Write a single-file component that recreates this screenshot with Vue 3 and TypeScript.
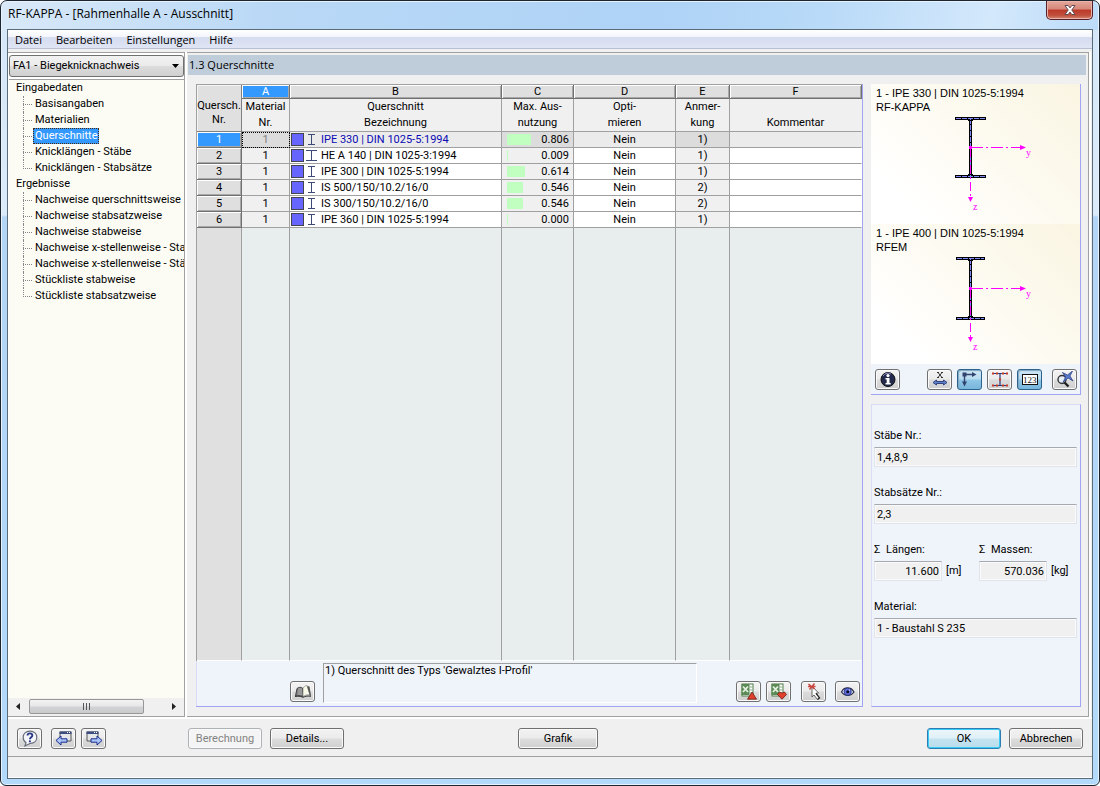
<script setup lang="ts">
import { ref } from 'vue'

interface SectionRow {
  nr: number
  material: number
  name: string
  wide: boolean
  ratio: number
  optimise: string
  note: string
}

interface Preview {
  title: string
  program: string
  half: number
  bottom: number
}

const menu = ['Datei', 'Bearbeiten', 'Einstellungen', 'Hilfe']

const tree = [
  {
    label: 'Eingabedaten',
    items: ['Basisangaben', 'Materialien', 'Querschnitte', 'Knicklängen - Stäbe', 'Knicklängen - Stabsätze'],
  },
  {
    label: 'Ergebnisse',
    items: [
      'Nachweise querschnittsweise',
      'Nachweise stabsatzweise',
      'Nachweise stabweise',
      'Nachweise x-stellenweise - Stab',
      'Nachweise x-stellenweise - Stäb',
      'Stückliste stabweise',
      'Stückliste stabsatzweise',
    ],
  },
]

const activeItem = ref('Querschnitte')
const activeRow = ref(1)

const letters = ['A', 'B', 'C', 'D', 'E', 'F']
const heads = [
  ['Material', 'Nr.'],
  ['Querschnitt', 'Bezeichnung'],
  ['Max. Aus-', 'nutzung'],
  ['Opti-', 'mieren'],
  ['Anmer-', 'kung'],
  ['\u00a0', 'Kommentar'],
]

const rows: SectionRow[] = [
  { nr: 1, material: 1, name: 'IPE 330 | DIN 1025-5:1994', wide: false, ratio: 0.806, optimise: 'Nein', note: '1)' },
  { nr: 2, material: 1, name: 'HE A 140 | DIN 1025-3:1994', wide: true, ratio: 0.009, optimise: 'Nein', note: '1)' },
  { nr: 3, material: 1, name: 'IPE 300 | DIN 1025-5:1994', wide: false, ratio: 0.614, optimise: 'Nein', note: '1)' },
  { nr: 4, material: 1, name: 'IS 500/150/10.2/16/0', wide: false, ratio: 0.546, optimise: 'Nein', note: '2)' },
  { nr: 5, material: 1, name: 'IS 300/150/10.2/16/0', wide: false, ratio: 0.546, optimise: 'Nein', note: '2)' },
  { nr: 6, material: 1, name: 'IPE 360 | DIN 1025-5:1994', wide: false, ratio: 0, optimise: 'Nein', note: '1)' },
]

const previews: Preview[] = [
  { title: '1 - IPE 330 | DIN 1025-5:1994', program: 'RF-KAPPA', half: 15, bottom: 61 },
  { title: '1 - IPE 400 | DIN 1025-5:1994', program: 'RFEM', half: 14, bottom: 63 },
]

const barWidth = (ratio: number): string => `${Math.max(1, Math.round(ratio * 30))}px`
</script>

<template>
  <div class="window">
    <header class="titlebar">
      <h1>RF-KAPPA - [Rahmenhalle A - Ausschnitt]</h1>
      <button class="close" type="button" aria-label="Schließen">
        <svg width="12" height="10" viewBox="0 0 12 10">
          <path d="M1 .5h3.2L6 2.900 7.800.5H11L7.800 5 11 9.500H7.800L6 7.100 4.200 9.500H1L4.200 5z" fill="#fff" stroke="#5d4a52" stroke-width="1" />
        </svg>
      </button>
    </header>

    <div class="client">
      <nav class="menubar">
        <button v-for="m in menu" :key="m" type="button">{{ m }}</button>
      </nav>

      <main class="main">
        <aside class="sidebar">
          <div class="combo">
            <select aria-label="Bemessungsfall">
              <option>FA1 - Biegeknicknachweis</option>
            </select>
            <svg class="combo-arrow" width="7" height="4" viewBox="0 0 7 4"><path d="M0 0h7L3.500 4z" fill="#000" /></svg>
          </div>
          <div class="tree">
            <div v-for="g in tree" :key="g.label" class="group">
              <div class="group-label">{{ g.label }}</div>
              <ul>
                <li v-for="i in g.items" :key="i">
                  <button type="button" :class="{ active: i === activeItem }" @click="activeItem = i">{{ i }}</button>
                </li>
              </ul>
            </div>
          </div>
          <div class="scrollbar">
            <svg width="4" height="7" viewBox="0 0 4 7"><path d="M4 0v7L0 3.500z" fill="#222" /></svg>
            <div class="track"><div class="thumb"><i></i><i></i><i></i></div></div>
            <svg width="4" height="7" viewBox="0 0 4 7"><path d="M0 0v7L4 3.500z" fill="#222" /></svg>
          </div>
        </aside>

        <section class="page">
          <h2>1.3 Querschnitte</h2>
          <div class="columns">
            <div class="sheet">
              <div class="table-wrap">
                <table>
                  <colgroup>
                    <col class="c-nr" /><col class="c-a" /><col class="c-b" /><col class="c-c" /><col class="c-d" /><col class="c-e" /><col />
                  </colgroup>
                  <thead>
                    <tr class="letters">
                      <th rowspan="2" class="corner">Quersch.<br />Nr.</th>
                      <th v-for="l in letters" :key="l" class="raised" :class="{ on: l === 'A' }">{{ l }}</th>
                    </tr>
                    <tr class="heads">
                      <th v-for="h in heads" :key="h[1]">{{ h[0] }}<br />{{ h[1] }}</th>
                    </tr>
                  </thead>
                  <tbody>
                    <tr v-for="r in rows" :key="r.nr" :class="{ current: r.nr === activeRow }" @click="activeRow = r.nr">
                      <th scope="row" class="raised" :class="{ on: r.nr === activeRow }">{{ r.nr }}</th>
                      <td class="ro mat">{{ r.material }}</td>
                      <td>
                        <div class="name">
                          <span class="swatch"></span>
                          <svg width="12" height="11" viewBox="0 0 12 11" fill="#3d4a78" shape-rendering="crispEdges">
                            <path v-if="r.wide" d="M1 0h11v1H1zM1 10h11v1H1zM6 1h1v9H6z" />
                            <path v-else d="M3 0h7v1H3zM3 10h7v1H3zM6 1h1v9H6z" />
                          </svg>
                          <span class="label">{{ r.name }}</span>
                        </div>
                      </td>
                      <td class="ro">
                        <div class="ratio"><span class="bar" :style="{ width: barWidth(r.ratio) }"></span>{{ r.ratio.toFixed(3) }}</div>
                      </td>
                      <td>{{ r.optimise }}</td>
                      <td class="ro">{{ r.note }}</td>
                      <td></td>
                    </tr>
                    <tr class="filler">
                      <td class="side"></td><td v-for="l in letters" :key="l"></td>
                    </tr>
                  </tbody>
                </table>
              </div>
              <div class="sheet-foot">
                <button class="tool" type="button" aria-label="Bibliothek">
                  <svg width="18" height="16" viewBox="0 0 18 16">
                    <path d="M1.500 12L3 4.500c2-1.500 4-1.500 5.500-.5l.5 8.500c-2-1-5-1-7.500-.5z" fill="#777" stroke="#444" />
                    <path d="M4 4.500c1.500-1 3-1 4 0l.5 7c-1.500-.6-3-.7-5-.4z" fill="#999" />
                    <path d="M9 4c2-2 3-2.500 4-2.500l3 9.500c-2.500-.5-5 0-7 1.500z" fill="#fafae8" stroke="#777" stroke-width=".6" />
                    <path d="M13 2l2.500.5 1.500 9-1 .5z" fill="#555" /><path d="M1 12.500c3-.6 5-.4 8 .8 2-1 5-1.600 8-1" fill="none" stroke="#333" />
                  </svg>
                </button>
                <div class="note">1) Querschnitt des Typs 'Gewalztes I-Profil'</div>
                <div class="sheet-tools">
                  <button v-for="dir in ['up', 'down']" :key="dir" class="tool" type="button" :aria-label="dir === 'up' ? 'Excel-Export' : 'Excel-Import'">
                    <svg width="18" height="17" viewBox="0 0 18 17">
                      <rect x="2" y="1" width="11" height="12" fill="#fff" stroke="#4f7d4b" />
                      <path d="M9.500 4h3M9.500 7h3M9.500 10h3" stroke="#8bb086" />
                      <path d="M1.500 1h8v11h-8z" fill="#5b8a57" />
                      <path d="M3 3.500l5 5.500m0-5.500L3 9" stroke="#e4f2e0" stroke-width="1.800" />
                      <path v-if="dir === 'up'" d="M12 9l4.500 7.200h-9z" fill="#e0402c" stroke="#701a12" stroke-width=".8" />
                      <path v-else d="M12 16.200L7.500 11.500l2-2.500 2.500 1 2.500-1 2 2.500z" fill="#e0402c" stroke="#701a12" stroke-width=".8" />
                    </svg>
                  </button>
                  <button class="tool pick" type="button" aria-label="Auswählen">
                    <svg width="18" height="17" viewBox="0 0 18 17">
                      <path d="M7 3l6.500 7-2.500.3 3.500 4.700-2 1.500-3.500-4.500-2 2z" fill="#fff" stroke="#555" stroke-width=".9" />
                      <path d="M11 10.300l3.500 4.700-2 1.500" fill="none" stroke="#222" stroke-width="1.200" />
                      <path d="M3.500 1l6 5M9.500 .5L4.500 6.500M3 3.500h7.500" stroke="#c8473f" stroke-width="1.500" />
                    </svg>
                  </button>
                  <button class="tool view" type="button" aria-label="Ansicht">
                    <svg width="18" height="16" viewBox="0 0 18 16">
                      <path d="M2.500 8C5 2.500 12 2.500 15 8c-3 4.500-9.500 4.500-12.500 0z" fill="#d9dff5" stroke="#2a2c45" stroke-width="1.200" />
                      <circle cx="8.700" cy="7.700" r="3.600" fill="#5f70e0" stroke="#28317f" stroke-width=".8" />
                      <circle cx="8.700" cy="7.700" r="1.500" fill="#0a0a20" /><path d="M10 6h1" stroke="#fff" />
                    </svg>
                  </button>
                </div>
              </div>
            </div>

            <div class="right">
              <div class="previews">
                <figure v-for="p in previews" :key="p.program">
                  <figcaption>{{ p.title }}<br />{{ p.program }}</figcaption>
                  <svg width="208" height="108" viewBox="0 0 208 108">
                    <g shape-rendering="crispEdges">
                      <rect :x="99 - p.half" y="3" :width="p.half * 2 + 1" height="3" fill="#000" />
                      <rect :x="99 - p.half" :y="p.bottom" :width="p.half * 2 + 1" height="3" fill="#000" />
                      <rect x="98" y="5" width="3" :height="p.bottom - 4" fill="#000" />
                      <path :d="`M${100 - p.half} 4.500H${99 + p.half}M${100 - p.half} ${p.bottom + 1.5}H${99 + p.half}M99.500 5V${p.bottom + 1}`" stroke="#7f88f8" stroke-dasharray="5 1" />
                      <path :d="`M97 6.500h5M97 ${p.bottom - 1}h5`" stroke="#000" />
                      <path :d="`M99.500 ${p.bottom / 2 + 3}V86`" stroke="#f0f" stroke-dasharray="9 3 2 3" />
                      <path :d="`M100 ${Math.round(p.bottom / 2) + 2.5}H150`" stroke="#f0f" stroke-dasharray="12 3 2 3" />
                    </g>
                    <rect x="98" :y="Math.round(p.bottom / 2) + 1" width="3" height="3" fill="#f0f" />
                    <path :d="`M149 ${Math.round(p.bottom / 2)}v5l6-2.500z`" fill="#f0f" />
                    <path d="M97 83h5l-2.500 5z" fill="#f0f" />
                    <text x="155" :y="Math.round(p.bottom / 2) + 11">y</text>
                    <text x="102" y="96">z</text>
                  </svg>
                </figure>
                <div class="preview-tools">
                  <button class="tool" type="button" aria-label="Info">
                    <svg width="18" height="17" viewBox="0 0 18 17">
                      <circle cx="9" cy="8.500" r="7" fill="#232a4c" stroke="#111" />
                      <path d="M4 5c2-3 6-3.500 8-2" stroke="#8a94c4" fill="none" />
                      <circle cx="9" cy="4.600" r="1.600" fill="#fff" /><path d="M6.500 7h4v5h1.200v1.500H6.500V12h1.200V8.500H6.500z" fill="#fff" />
                    </svg>
                  </button>
                  <button class="tool gap-a" type="button" aria-label="Maße">
                    <svg width="18" height="17" viewBox="0 0 18 17">
                      <path d="M7 1.500l4 5M11 1.500l-4 5M6 1.500h2M10 1.500h2M6 6.500h2M10 6.500h2" stroke="#222" stroke-width=".9" />
                      <path d="M2 11.500L5.500 9v1.500h7V9l3.500 2.500-3.500 2.500v-1.500h-7V14z" fill="#5f7fd0" stroke="#33457f" />
                    </svg>
                  </button>
                  <button class="tool pressed" type="button" aria-label="Achsen">
                    <svg width="18" height="17" viewBox="0 0 18 17">
                      <path d="M3.500 3.500h9M3.500 3.500v9" stroke="#31456f" stroke-width="1.400" />
                      <path d="M11 1l4.500 2.500L11 6zM1 10.500h5l-2.500 5z" fill="#31456f" /><rect x="1.500" y="1.500" width="4" height="4" fill="#31456f" />
                    </svg>
                  </button>
                  <button class="tool" type="button" aria-label="Spannungspunkte">
                    <svg width="18" height="17" viewBox="0 0 18 17">
                      <path d="M2 2.500h14M2 14.500h14M9 2.500v12" stroke="#2c3876" stroke-width="1.200" />
                      <path d="M1 1.500h2v2H1zM5 1.500h2v2H5zM11 1.500h2v2h-2zM15 1.500h2v2h-2zM8 7.500h2v2H8zM1 13.500h2v2H1zM5 13.500h2v2H5zM11 13.500h2v2h-2zM15 13.500h2v2h-2z" fill="#c83a24" />
                    </svg>
                  </button>
                  <button class="tool pressed" type="button" aria-label="Nummerierung">
                    <svg width="18" height="17" viewBox="0 0 18 17">
                      <rect x="1.500" y="3.500" width="15" height="10" fill="#fff" stroke="#111" />
                      <text class="digits" x="2" y="12">123</text>
                    </svg>
                  </button>
                  <button class="tool gap-b" type="button" aria-label="Ganzer Querschnitt">
                    <svg width="18" height="17" viewBox="0 0 18 17">
                      <circle cx="6" cy="8.500" r="4" fill="#e6eefa" stroke="#333" stroke-width="1.400" />
                      <path d="M8.500 11.500l4 4" stroke="#222" stroke-width="2.400" />
                      <path d="M6.500 1.500l5 2.500L16.500 0 14 5l3 5-5-3-5 4.500L9.500 6z" fill="#5878cc" stroke="#22397c" stroke-width=".7" />
                    </svg>
                  </button>
                </div>
              </div>

              <div class="details">
                <div class="field">
                  <label for="staebe">Stäbe Nr.:</label>
                  <input id="staebe" type="text" readonly value="1,4,8,9" />
                </div>
                <div class="field">
                  <label for="saetze">Stabsätze Nr.:</label>
                  <input id="saetze" type="text" readonly value="2,3" />
                </div>
                <div class="pair">
                  <div class="field sum">
                    <label for="laengen"><span class="sigma">Σ</span>Längen:</label>
                    <div class="with-unit"><input id="laengen" type="text" readonly value="11.600" />[m]</div>
                  </div>
                  <div class="field sum">
                    <label for="massen"><span class="sigma">Σ</span>Massen:</label>
                    <div class="with-unit"><input id="massen" type="text" readonly value="570.036" />[kg]</div>
                  </div>
                </div>
                <div class="field">
                  <label for="material">Material:</label>
                  <input id="material" type="text" readonly value="1 - Baustahl S 235" />
                </div>
              </div>
            </div>
          </div>
        </section>
      </main>

      <footer class="actions">
        <div class="left-tools">
          <button class="tool" type="button" aria-label="Hilfe">
            <svg width="18" height="17" viewBox="0 0 18 17">
              <path d="M9 1.200c4.200 0 6.800 2.600 6.800 6s-2.600 6-6.300 6.100L4 15.800l1-3.300C3 11.500 2.200 9.500 2.200 7.200c0-3.400 2.600-6 6.800-6z" fill="#f4f6fa" stroke="#6a6f7c" stroke-width="1.200" />
              <path d="M6.500 5.500c.2-3 5.200-2.700 4.800.2-.2 1.600-2.300 1.700-2.400 3.500" fill="none" stroke="#2b3a86" stroke-width="1.900" /><circle cx="8.900" cy="11.300" r="1.100" fill="#2b3a86" />
            </svg>
          </button>
          <button class="tool prev" type="button" aria-label="Zurück">
            <svg width="18" height="17" viewBox="0 0 18 17">
              <path d="M5 2h11v9H5z" fill="#e4e6ea" stroke="#555" /><path d="M4.500 1.500h12v2.500h-12z" fill="#3c4c80" /><path d="M12 2.500h1M14 2.500h1" stroke="#fff" />
              <path d="M1 10.500L6 6v2.800h6v3.400H6V15z" fill="#a9c2f8" stroke="#1b2c8c" />
            </svg>
          </button>
          <button class="tool" type="button" aria-label="Weiter">
            <svg width="18" height="17" viewBox="0 0 18 17">
              <path d="M2 2h11v9H2z" fill="#e4e6ea" stroke="#555" /><path d="M1.500 1.500h12v2.500h-12z" fill="#3c4c80" /><path d="M9 2.500h1M11 2.500h1" stroke="#fff" />
              <path d="M17 10.500L12 6v2.800H6v3.400h6V15z" fill="#a9c2f8" stroke="#1b2c8c" />
            </svg>
          </button>
        </div>
        <button class="btn" type="button" disabled>Berechnung</button>
        <button class="btn details-btn" type="button">Details...</button>
        <button class="btn grafik" type="button">Grafik</button>
        <button class="btn ok" type="button">OK</button>
        <button class="btn" type="button">Abbrechen</button>
      </footer>
      <div class="status"></div>
    </div>
  </div>
</template>

<style>
body {
  background: #fff;
}
</style>

<style scoped>
* {
  box-sizing: border-box;
}
button,
input,
select {
  font: inherit;
  color: inherit;
  margin: 0;
  padding: 0;
}
.window {
  min-height: 100vh;
  display: flex;
  flex-direction: column;
  padding: 0 6px 6px;
  border: 1px solid #1d2630;
  border-radius: 7px 7px 6px 6px;
  background:
    linear-gradient(100deg, #d9e9f8 0, #b9d8f6 25%, #aed3f6 60%, #b9daf8 75%, #d3e8fb 90%, #bcdcf8 100%) 0 0 / 100% 29px no-repeat,
    linear-gradient(#d3e6f8 0, #dcebfa 214px, #b3d5f6 216px, #b3d9fb 100%);
  box-shadow: inset 0 0 0 1px #e6f3fd;
  font: 11px/14px Roboto, 'Liberation Sans', Arial, sans-serif;
  color: #000;
}
.titlebar {
  display: flex;
  justify-content: space-between;
  align-items: flex-start;
  height: 28px;
}
h1 {
  margin: 0;
  padding: 4px 0 0 1px;
  font: 12px/18px 'Open Sans', 'Noto Sans', sans-serif;
}
.close {
  display: flex;
  align-items: center;
  justify-content: center;
  width: 47px;
  height: 19px;
  border: 1px solid #55202a;
  border-top: 0;
  border-radius: 0 0 5px 5px;
  background: linear-gradient(#e5a79c 0, #d5877a 45%, #bd3827 50%, #c0503e 80%, #d88a78 100%);
  box-shadow: inset 0 0 0 1px #e9b5ab;
}
.client {
  flex: 1;
  display: flex;
  flex-direction: column;
  border: 1px solid #5a6b7a;
  background: #f0f0f0;
}
.menubar {
  display: flex;
  height: 19px;
  background: linear-gradient(#fff 0, #f3f5fb 38%, #d5dcef 42%, #dfe5f4 100%);
  border-bottom: 1px solid #b9c0d4;
}
.menubar button {
  border: 0;
  background: none;
  padding: 1px 7px 0 7px;
  font: 11px/18px 'Open Sans', 'Noto Sans', sans-serif;
}
.main {
  flex: 1;
  display: grid;
  grid-template-columns: 177px minmax(0, 1fr);
  gap: 2px;
  padding: 3px 3px 0 0;
  box-shadow: 0 2px #fff;
}
.sidebar {
  display: flex;
  flex-direction: column;
  min-width: 0;
  border: 1px solid #a0a0a0;
  border-left: 0;
  background: #fff;
  box-shadow: 2px 0 #fff;
}
.combo {
  position: relative;
  height: 22px;
  margin: 2px 0 2px 1px;
}
.combo select {
  width: 100%;
  height: 100%;
  padding: 0 20px 0 3px;
  appearance: none;
  border: 1px solid #707070;
  border-radius: 3px;
  background: linear-gradient(#f2f2f2 0, #ebebeb 48%, #dddddd 52%, #cfcfcf 100%);
}
.combo-arrow {
  position: absolute;
  right: 5px;
  top: 9px;
  pointer-events: none;
}
.tree {
  flex: 1;
  margin-left: 1px;
  padding-left: 1px;
  overflow: hidden;
  border-top: 1px solid #a0a0a0;
  background: #fcfcf4;
  white-space: nowrap;
}
.group-label {
  padding-left: 6px;
  line-height: 16px;
}
.tree ul {
  margin: 0;
  padding: 0;
  list-style: none;
}
.tree li {
  position: relative;
  height: 16px;
  padding-left: 23px;
}
.tree li::before,
.tree li::after {
  content: '';
  position: absolute;
  left: 13px;
  top: 0;
  height: 100%;
  border-left: 1px dotted #888;
}
.tree li:last-child::before {
  height: 9px;
}
.tree li::after {
  top: 8px;
  width: 9px;
  height: 1px;
  border-left: 0;
  border-top: 1px dotted #888;
}
.tree button {
  display: block;
  height: 16px;
  padding: 0 1px;
  border: 1px solid transparent;
  background: none;
  line-height: 14px;
}
.tree button.active {
  background: #3399ff;
  border: 1px dotted #4a2a10;
  color: #fff;
}
.scrollbar {
  display: flex;
  align-items: center;
  height: 18px;
  padding: 0 8px 2px 8px;
  background: #f0f0f0;
}
.track {
  flex: 1;
  padding: 0 28px 0 9px;
}
.thumb {
  display: flex;
  align-items: center;
  justify-content: center;
  gap: 2px;
  height: 15px;
  border: 1px solid #979797;
  border-radius: 2px;
  background: linear-gradient(#f3f3f3 0, #e6e6e8 48%, #d2d3d6 52%, #cacbcd 100%);
}
.thumb i {
  width: 1px;
  height: 7px;
  background: #555;
}
.page {
  display: flex;
  flex-direction: column;
  min-width: 0;
  padding-left: 1px;
  border: 1px solid #a0a0a0;
  border-left: 0;
  box-shadow: 2px 0 #fff;
}
h2 {
  margin: 2px 2px 9px 0;
  padding-left: 1px;
  font: 11px/20px 'Open Sans', 'Noto Sans', sans-serif;
  background: #bfccd9;
}
.columns {
  flex: 1;
  display: grid;
  grid-template-columns: minmax(0, 1fr) 210px;
  gap: 8px;
  padding: 0 7px 9px 8px;
}
.sheet {
  display: flex;
  flex-direction: column;
  border-right: 1px solid #a3a3f3;
  border-bottom: 1px solid #a3a3f3;
  background: #eff3fa;
}
.table-wrap {
  flex: 1;
  display: grid;
  border-left: 1px solid #a0a0a0;
  border-top: 1px solid #a0a0a0;
}
table {
  width: 100%;
  height: 100%;
  table-layout: fixed;
  border-collapse: separate;
  border-spacing: 0;
}
.c-nr { width: 45px; }
.c-a { width: 48px; }
.c-b { width: 212px; }
.c-c { width: 72px; }
.c-d { width: 102px; }
.c-e { width: 54px; }
th,
td {
  padding: 0;
  border-right: 1px solid #a0a0a0;
  border-bottom: 1px solid #a0a0a0;
  font-weight: normal;
  text-align: center;
  white-space: nowrap;
  line-height: 15px;
}
th:last-child,
td:last-child {
  border-right-color: transparent;
}
td {
  background: #fff;
}
.letters th {
  height: 14px;
  line-height: 13px;
}
.letters th.corner {
  background: #e0e0e0;
  line-height: 14px;
  border-right-color: #808080;
  border-bottom-color: #808080;
  box-shadow: inset 1px 1px #f4f4f4;
  padding-top: 14px;
  vertical-align: top;
}
th.raised {
  background: #dfdfdf;
  border-right: 1px solid #707070;
  border-bottom: 1px solid #707070;
  box-shadow: inset 1px 1px #fff, inset -1px -1px #a8a8a8;
}
th.raised.on {
  background: #3399ff;
  color: #fff;
}
.heads th {
  height: 33px;
  line-height: 16px;
  vertical-align: top;
  background: #f0f0f0;
}
tbody tr {
  height: 16px;
}
td.ro {
  background: #f0f0f0;
}
.current td {
  background: #ebebeb;
}
.current td.ro {
  background: #dcdcdc;
}
.current td.mat {
  color: #808080;
  outline: 1px dotted #000;
  outline-offset: -1px;
}
.name {
  display: flex;
  align-items: center;
  height: 15px;
  padding-left: 1px;
}
.swatch {
  width: 13px;
  height: 13px;
  margin-right: 1px;
  border: 1px solid #44444c;
  background: #6666ff;
}
.name .label {
  margin-left: 4px;
}
.current .label {
  color: #0a0ab4;
}
.ratio {
  display: flex;
  align-items: center;
  justify-content: space-between;
  height: 15px;
  padding: 0 4px 0 5px;
}
.bar {
  height: 11px;
  background: #c0ffc0;
}
tbody tr.filler {
  height: auto;
}
.filler td {
  background: #e8eeee;
  border-bottom-color: #fff;
}
.filler td.side {
  background: #e0e0e0;
}
.sheet-foot {
  display: flex;
  height: 45px;
  padding: 2px 2px 3px 93px;
  border-left: 1px solid #d8dcf6;
}
.note {
  flex: 1;
  max-width: 374px;
  margin-left: 8px;
  padding: 0 1px;
  border: 1px solid #fff;
  border-top-color: #a0a0a0;
  border-left-color: #a0a0a0;
}
.sheet-tools {
  display: flex;
  gap: 5px;
  margin-left: auto;
}
.sheet-foot .tool {
  align-self: flex-end;
}
.sheet-foot > .tool,
.sheet-tools .tool {
  margin-bottom: 1px;
}
.tool {
  display: flex;
  align-items: center;
  justify-content: center;
  flex: none;
  width: 25px;
  height: 21px;
  border: 1px solid #707070;
  border-radius: 3px;
  background: linear-gradient(#f3f3f3 0, #ebebeb 48%, #dcdcdc 52%, #cfcfcf 100%);
  box-shadow: inset 0 0 0 1px #fafafa;
}
.pick {
  margin-left: 5px;
}
.view {
  margin-left: 4px;
}
.tool.pressed {
  border-color: #2c628b;
  background: linear-gradient(#cfe6f5 0, #b9dcf0 48%, #8fc6e6 52%, #78b6dc 100%);
  box-shadow: inset 1px 1px 1px #7fa6bf;
}
.right {
  display: flex;
  flex-direction: column;
  gap: 9px;
}
.previews {
  border-right: 1px solid #a3a3f3;
  border-bottom: 1px solid #a3a3f3;
  background: #eff3fa;
}
figure {
  height: 140px;
  margin: 0;
  padding-top: 2px;
  background: linear-gradient(225deg, #faf5e2 0, #fdfbf2 50%, #ffffff 85%);
}
figure svg {
  display: block;
}
figure text {
  font: 10px 'Liberation Serif', serif;
  fill: #f0f;
}
figcaption {
  padding-left: 5px;
  font-family: 'Liberation Sans', Arial, sans-serif;
}
.preview-tools {
  display: flex;
  gap: 5px;
  padding: 5px 3px 4px 4px;
}
.gap-a {
  margin-left: auto;
}
.gap-b {
  margin-left: 5px;
}
.digits {
  font: 9px 'Liberation Serif', serif;
  fill: #111;
}
.details {
  flex: 1;
  display: flex;
  flex-direction: column;
  gap: 19px;
  padding: 24px 3px 0 2px;
  border: 1px solid #d8dcf4;
  border-right-color: #a3a3f3;
  border-bottom-color: #a3a3f3;
  background: #eff3fa;
}
.field label {
  display: block;
  margin-bottom: 4px;
}
.field input {
  display: block;
  width: 100%;
  height: 20px;
  padding: 0 2px;
  border: 1px solid #e2e4ec;
  border-top-color: #a7a9b0;
  border-radius: 0;
  background: #f0f0f0;
  box-shadow: inset 0 0 0 1px #fafafa;
}
.pair {
  display: flex;
  gap: 18px;
}
.sum {
  width: 87px;
}
.sigma {
  display: inline-block;
  width: 12px;
}
.with-unit {
  display: flex;
  align-items: center;
  gap: 4px;
}
.field.sum input {
  width: 68px;
  flex: none;
  text-align: right;
}
.actions {
  display: flex;
  align-items: center;
  height: 39px;
  padding: 4px 9px 0 9px;
}
.left-tools {
  display: flex;
  gap: 5px;
  width: 171px;
}
.prev {
  margin-left: 4px;
}
.btn {
  width: 74px;
  height: 21px;
  border: 1px solid #707070;
  border-radius: 3px;
  background: linear-gradient(#f2f2f2 0, #ebebeb 48%, #dddddd 52%, #cfcfcf 100%);
  box-shadow: inset 0 0 0 1px #fafafa;
  line-height: 18px;
}
.btn:disabled {
  border-color: #adb2b5;
  background: #f4f4f4;
  color: #838383;
}
.details-btn {
  margin-left: 8px;
}
.grafik {
  width: 80px;
  margin-left: 174px;
}
.ok {
  margin-left: auto;
  margin-right: 8px;
  border-color: #2f7db0;
  background: linear-gradient(#eef6fa 0, #dff0f8 48%, #c5e3f0 52%, #b8dcec 100%);
  box-shadow: inset 0 0 0 1px #35cdf7;
}
.status {
  height: 22px;
  border-top: 1px solid #a0a0a0;
  border-bottom: 1px solid #fff;
}
</style>
